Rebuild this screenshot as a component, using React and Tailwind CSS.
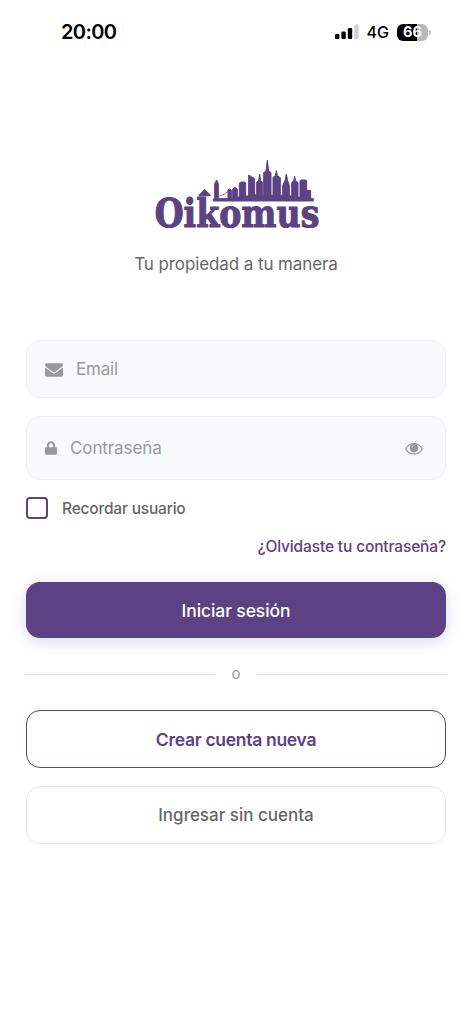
import React from "react";
import { FaEnvelope, FaLock } from "react-icons/fa";

const StatusBar = () => (
  <div className="flex h-16 items-center justify-between pl-[61px] pr-[44px] text-black">
    <span className="text-[20px] font-semibold leading-6 tracking-[-0.6px]">
      20:00
    </span>
    <div className="flex items-center">
      <svg width="24" height="16" viewBox="0 0 24 16" className="-ml-px mr-px">
        <rect x="0" y="10" width="4.4" height="5" rx="1.2" />
        <rect x="6.4" y="7.5" width="4.4" height="7.5" rx="1.2" />
        <rect x="12.8" y="4" width="4.4" height="11" rx="1.2" />
        <rect x="19.3" y="0.5" width="4.4" height="14.5" rx="1.2" fill="#d2d2d2" />
      </svg>
      <span className="ml-[7px] text-[16px] font-medium leading-5">4G</span>
      <div className="relative ml-[8px] flex h-[17px] w-[31px] items-center justify-center rounded-[6px] bg-linear-to-r from-black from-66% to-[#b8b8b8] to-66%">
        <span className="text-[14.5px] font-bold leading-none text-white">66</span>
        <span className="absolute -right-[3px] top-[6px] h-[5px] w-[2px] rounded-r-full bg-[#c4c4c4]" />
      </div>
    </div>
  </div>
);

const Logo = () => (
  <svg
    width="190"
    height="90"
    viewBox="0 0 570 270"
    fill="#5c4282"
    className="overflow-visible"
  >
    {/* skyline */}
    <path
      d="M217 147H221V101L227 90L232 101V146H261V120L266 117L271 120V143H275V117L282 112L289 117V141H295V99L300 96H311L314 99V138H323V75L341 86V134H347V97L353 92L356 72L359 92L364 97V136H368V68L375 63L379 31L383 63L390 68V136H396V82L403 77L406 62L409 77L418 83V136H425V106L432 92L436 72L440 92L445 106V138H452V98L458 92L461 79L464 92L471 98V142H477V92L480 90H494L497 92V121H509V146H517V153H217Z"
      stroke="#5c4282"
      strokeWidth="3"
      strokeLinejoin="round"
    />
    <path d="M234 138q16-2 29-15" fill="none" stroke="#5c4282" strokeWidth="2" />
    {/* roof over the k */}
    <path d="M172 136l19-19 19 19-3 3h-32z" />
    <text
      x="41"
      y="231"
      fontSize="117"
      fontWeight="700"
      fontFamily="'DejaVu Serif', serif"
      textLength="494"
      lengthAdjust="spacingAndGlyphs"
      stroke="#5c4282"
      strokeWidth="3.5"
      strokeLinejoin="round"
    >
      Oikomus
    </text>
  </svg>
);

const EyeIcon = () => (
  <svg width="18" height="14" viewBox="0 0 18 14" className="mt-0.5 text-[#999]">
    <path
      d="M.7 7C4.5-.2 13.5-.2 17.3 7 13.5 13.7 4.5 13.7.7 7z"
      fill="none"
      stroke="currentColor"
      strokeWidth="1.2"
    />
    <circle cx="9" cy="6" r="4.4" fill="currentColor" />
    <path d="M6.7 5.4Q7 3.8 8.5 3.5" fill="none" stroke="#f8f9fb" strokeWidth="0.6" />
  </svg>
);

export default function App() {
  return (
    <div className="min-h-screen w-[472px] bg-white font-['Inter',sans-serif]">
      <StatusBar />

      <main className="px-[26px]">
        <div className="mt-[86px] flex flex-col items-center">
          <Logo />
          <p className="mt-3 text-[17px] leading-6 tracking-[-0.1px] text-[#666]">
            Tu propiedad a tu manera
          </p>
        </div>

        <form className="mt-16 flex flex-col">
          <div className="flex h-[58px] items-center rounded-[14px] border border-[#eff0f3] bg-[#f8f9fb] pl-[18px] pt-0.5">
            <FaEnvelope className="h-[18px] w-[18px] text-[#999]" />
            <span className="ml-[13px] text-[17px] tracking-[-0.2px] text-[#999]">
              Email
            </span>
          </div>

          <div className="mt-[18px] flex h-[64px] items-center rounded-[14px] border border-[#eff0f3] bg-[#f8f9fb] pl-[18px] pr-[22px]">
            <FaLock className="h-[14px] w-[12px] text-[#999]" />
            <span className="ml-[13px] grow pt-0.5 text-[17px] tracking-[-0.1px] text-[#999]">
              Contraseña
            </span>
            <EyeIcon />
          </div>

          <label className="mt-[17px] flex h-[22px] items-center">
            <span className="h-[22px] w-[22px] rounded-[4px] border-2 border-[#5c4282]" />
            <span className="ml-[14px] pt-px text-[15.5px] font-medium tracking-[-0.2px] text-[#666]">
              Recordar usuario
            </span>
          </label>

          <a className="mt-4 self-end text-[15.5px] font-medium leading-6 tracking-[-0.14px] text-[#5c4282]">
            ¿Olvidaste tu contraseña?
          </a>

          <button
            type="button"
            className="mt-[23px] h-14 rounded-[14px] bg-[#5c4282] pt-0.5 text-[17.5px] font-medium tracking-[-0.1px] text-white shadow-[0_4px_16px_rgba(92,66,130,0.2)]"
          >
            Iniciar sesión
          </button>

          <div className="my-6 flex h-6 items-center">
            <span className="h-px grow bg-[#e2e2e2]" />
            <span className="w-[44px] text-center text-[15px] text-[#999]">o</span>
            <span className="h-px grow bg-[#e2e2e2]" />
          </div>

          <button
            type="button"
            className="h-[58px] rounded-[14px] border border-[#5c4282] pt-0.5 text-[17.5px] font-semibold tracking-[-0.3px] text-[#5c4282]"
          >
            Crear cuenta nueva
          </button>
          <button
            type="button"
            className="mt-[18px] h-[58px] rounded-[14px] border border-[#e4e4e6] pt-0.5 text-[17px] font-medium text-[#666]"
          >
            Ingresar sin cuenta
          </button>
        </form>
      </main>
    </div>
  );
}
